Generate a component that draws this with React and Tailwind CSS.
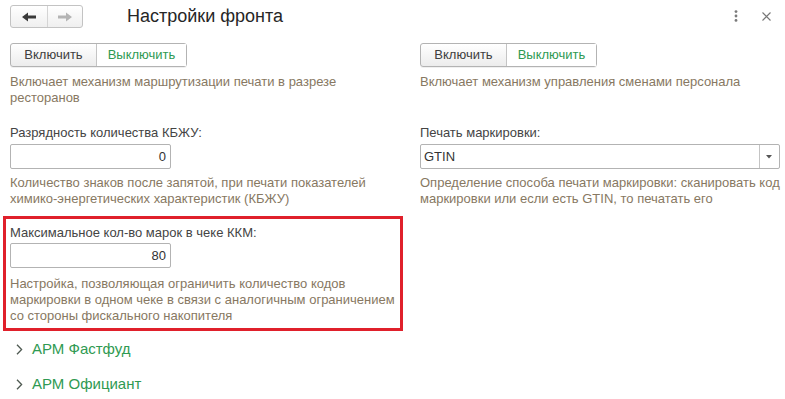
import React from 'react';

const font = { fontFamily: '"Liberation Sans", Arial, sans-serif' };

function Toggle() {
    return (
        <div className="flex h-[24px] w-[177px] rounded-[3px] border border-[#b3b3b3] bg-gradient-to-b from-white to-[#ececec] text-[13px] shadow-[0_1px_0_rgba(0,0,0,0.06)]">
            <div className="flex w-[86px] items-center justify-center border-r border-[#c4c4c4] text-[#404040]">Включить</div>
            <div className="flex flex-1 items-center justify-center bg-white text-[#2f9a52]">Выключить</div>
        </div>
    );
}

function Hint({ children }) {
    return <p className="whitespace-nowrap text-[13px] leading-[16px] text-[#877862]">{children}</p>;
}

function Label({ children }) {
    return <div className="text-[13px] leading-[16px] text-[#444]">{children}</div>;
}

function NumberField({ value }) {
    return (
        <div className="flex h-[25px] w-[161px] items-center justify-end rounded-[2px] border border-[#b3b3b3] bg-white pr-[4px] text-[13px] text-[#333]">
            {value}
        </div>
    );
}

function GroupLink({ title }) {
    return (
        <div className="flex h-[35px] items-center gap-[9px] pl-[16px]">
            <svg width="7" height="11" viewBox="0 0 7 11" fill="none" stroke="#4f5a52" strokeWidth="1.3" aria-hidden="true">
                <path d="M1 0.8 L5.6 5.5 L1 10.2" />
            </svg>
            <span className="text-[15px] text-[#2f9a52]">{title}</span>
        </div>
    );
}

export default function App() {
    return (
        <div className="h-[399px] w-[785px] overflow-hidden bg-white" style={font}>
            {/* header */}
            <div className="flex h-[43px] items-start pt-[5px]">
                <div className="ml-[10px] flex h-[23px] w-[73px] rounded-[3px] border border-[#c3c3c3] bg-gradient-to-b from-white to-[#efefef]">
                    <div className="flex w-[37px] items-center justify-center border-r border-[#d4d4d4]">
                        <svg width="14" height="10" viewBox="0 0 14 10" aria-hidden="true">
                            <path d="M0 5 L6 0.5 L6 3.5 L14 3.5 L14 6.5 L6 6.5 L6 9.5 Z" fill="#3a3a3a" />
                        </svg>
                    </div>
                    <div className="flex flex-1 items-center justify-center">
                        <svg width="14" height="10" viewBox="0 0 14 10" aria-hidden="true">
                            <path d="M14 5 L8 0.5 L8 3.5 L0 3.5 L0 6.5 L8 6.5 L8 9.5 Z" fill="#b4b4b4" />
                        </svg>
                    </div>
                </div>
                <h1 className="ml-[44px] mt-[-1px] text-[18px] leading-[24px] text-[#262626]">Настройки фронта</h1>
                <div className="ml-auto mr-[14px] mt-[5px] flex items-center gap-[24px]">
                    <svg width="4" height="12" viewBox="0 0 4 12" aria-hidden="true">
                        <circle cx="2" cy="1.6" r="1.4" fill="#7a7a7a" />
                        <circle cx="2" cy="6" r="1.4" fill="#7a7a7a" />
                        <circle cx="2" cy="10.4" r="1.4" fill="#7a7a7a" />
                    </svg>
                    <svg width="9" height="9" viewBox="0 0 9 9" stroke="#777" strokeWidth="1.1" aria-hidden="true">
                        <path d="M0.5 0.5 L8.5 8.5 M8.5 0.5 L0.5 8.5" />
                    </svg>
                </div>
            </div>

            {/* settings grid */}
            <div className="grid grid-cols-[400px_1fr] pl-[3px]">
                <div className="px-[7px]">
                    <Toggle />
                    <div className="mt-[7px]">
                        <Hint>Включает механизм маршрутизации печати в разрезе<br />ресторанов</Hint>
                    </div>
                </div>
                <div className="pl-[17px] pr-[8px]">
                    <Toggle />
                    <div className="mt-[7px]">
                        <Hint>Включает механизм управления сменами персонала</Hint>
                    </div>
                </div>

                <div className="px-[7px] pt-[19px]">
                    <Label>Разрядность количества КБЖУ:</Label>
                    <div className="mt-[3px]">
                        <NumberField value="0" />
                    </div>
                    <div className="mt-[6px]">
                        <Hint>Количество знаков после запятой, при печати показателей<br />химико-энергетических характеристик (КБЖУ)</Hint>
                    </div>
                </div>
                <div className="pl-[17px] pr-[8px] pt-[19px]">
                    <Label>Печать маркировки:</Label>
                    <div className="mt-[3px] flex h-[25px] rounded-[2px] border border-[#b3b3b3] bg-white text-[13px] text-[#333]">
                        <div className="flex flex-1 items-center pl-[3px]">GTIN</div>
                        <div className="flex w-[20px] items-center justify-center border-l border-[#c4c4c4]">
                            <svg width="6" height="4" viewBox="0 0 6 4" aria-hidden="true">
                                <path d="M0 0 L6 0 L3 3.5 Z" fill="#555" />
                            </svg>
                        </div>
                    </div>
                    <div className="mt-[6px]">
                        <Hint>Определение способа печати маркировки: сканировать код<br />маркировки или если есть GTIN, то печатать его</Hint>
                    </div>
                </div>

                <div className="mt-[9px] border-[3px] border-[#e0202b] px-[4px] pb-[4px] pt-[6px]">
                    <Label>Максимальное кол-во марок в чеке ККМ:</Label>
                    <div className="mt-[2px]">
                        <NumberField value="80" />
                    </div>
                    <div className="mt-[8px]">
                        <Hint>Настройка, позволяющая ограничить количество кодов<br />маркировки в одном чеке в связи с аналогичным ограничением<br />со стороны фискального накопителя</Hint>
                    </div>
                </div>
                <div />
            </div>

            {/* collapsed groups */}
            <div className="pt-[1px]">
                <GroupLink title="АРМ Фастфуд" />
                <GroupLink title="АРМ Официант" />
            </div>
        </div>
    );
}
